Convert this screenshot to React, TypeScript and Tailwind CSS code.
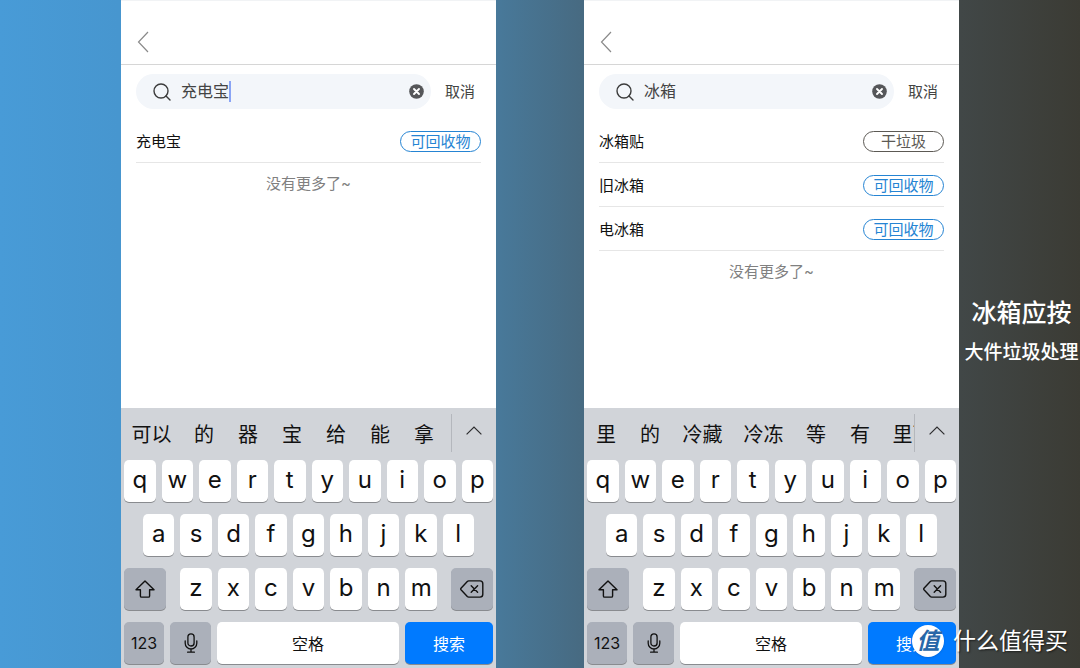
import * as React from "react";
import clsx from "clsx";

type Item = {
  name: string;
  type: "可回收物" | "干垃圾";
};

type PhoneProps = {
  id: string;
  query: string;
  focused?: boolean;
  items: Item[];
  candidates: string[];
};

function BackIcon() {
  return (
    <svg width="12" height="22" viewBox="0 0 12 22" fill="none" stroke="#8a8a8a" strokeWidth="1.2">
      <path d="M11 1 1.5 11 11 21" />
    </svg>
  );
}

function SearchIcon() {
  return (
    <svg width="18" height="18" viewBox="0 0 18 18" fill="none" stroke="#3c3c3c" strokeWidth="1.4">
      <circle cx="8" cy="8" r="7" />
      <path d="m13 13 4 4" strokeLinecap="round" />
    </svg>
  );
}

function ClearIcon() {
  return (
    <svg width="15" height="15" viewBox="0 0 15 15">
      <circle cx="7.5" cy="7.5" r="7.3" fill="#555659" />
      <path d="m5 5 5 5M10 5l-5 5" stroke="#fff" strokeWidth="1.9" strokeLinecap="round" />
    </svg>
  );
}

function ChevronUpIcon() {
  return (
    <svg width="16" height="9" viewBox="0 0 16 9" fill="none" stroke="#2d2d2f" strokeWidth="1.2">
      <path d="M.6 8.4 8 1l7.4 7.4" />
    </svg>
  );
}

function ShiftIcon() {
  return (
    <svg width="20" height="18" viewBox="0 0 20 18" fill="none" stroke="#111" strokeWidth="1.4" strokeLinejoin="round">
      <path d="M10 .9 19 9.8h-4.4v6.1c0 .7-.5 1.2-1.2 1.2H6.6c-.7 0-1.2-.5-1.2-1.2V9.8H1z" />
    </svg>
  );
}

function DeleteIcon() {
  return (
    <svg width="24" height="18" viewBox="0 0 24 18" fill="none" stroke="#111" strokeWidth="1.4" strokeLinejoin="round">
      <path d="M8.7.9H20a2.8 2.8 0 0 1 2.8 2.8v10.6a2.8 2.8 0 0 1-2.8 2.8H8.7c-.6 0-1-.2-1.4-.6L1 9.8c-.4-.5-.4-1.1 0-1.6l6.3-6.7c.4-.4.8-.6 1.4-.6z" />
      <path d="m11.2 5.800 6.400 6.400M17.600 5.800l-6.400 6.400" strokeLinecap="round" />
    </svg>
  );
}

function MicIcon() {
  return (
    <svg width="14" height="20" viewBox="0 0 14 20" fill="none" stroke="#111" strokeWidth="1.3" strokeLinecap="round">
      <rect x="3.9" y=".8" width="6.2" height="12.2" rx="3.1" />
      <path d="M1.2 7.8v2.4a5.8 5.8 0 0 0 11.6 0V7.8M7 16v3M3.6 19.2h6.8" />
    </svg>
  );
}

function Key({
  className,
  children,
  label,
}: {
  className?: string;
  children: React.ReactNode;
  label?: string;
}) {
  return (
    <button
      type="button"
      aria-label={label}
      className={clsx(
        "flex h-[42px] items-center justify-center rounded-[5px] shadow-[0_1px_0_#898b8f]",
        className,
      )}
    >
      {children}
    </button>
  );
}

function LetterKeys({ letters }: { letters: string }) {
  return (
    <>
      {letters.split("").map((letter) => (
        <Key key={letter} className="min-w-0 flex-1 bg-white pb-0.5 text-2xl text-[#111]">
          {letter}
        </Key>
      ))}
    </>
  );
}

function Keyboard({ candidates }: { candidates: string[] }) {
  return (
    <div className="mt-auto bg-[#d1d4d9] pb-1 text-[#111]">
      <div className="flex h-[44px]">
        <div className="flex min-w-0 flex-1 overflow-hidden pt-2.5">
          {candidates.map((word) => (
            <button
              key={word}
              type="button"
              className={clsx(
                "shrink-0 text-xl whitespace-nowrap",
                word.length > 1 ? "w-[61px]" : "w-[44px]",
              )}
            >
              {word}
            </button>
          ))}
        </div>
        <button
          type="button"
          aria-label="展开候选"
          className="mt-1.5 flex w-[45px] shrink-0 justify-center border-l border-[#b4b7bd] pt-3"
        >
          <ChevronUpIcon />
        </button>
      </div>

      <div className="flex flex-col gap-3 pt-2">
        <div className="flex gap-1.5 px-[3px]">
          <LetterKeys letters="qwertyuiop" />
        </div>
        <div className="flex gap-1.5 px-[22px]">
          <LetterKeys letters="asdfghjkl" />
        </div>
        <div className="flex gap-3.5 px-[3px]">
          <Key label="大写" className="w-[42px] bg-[#abb0ba]">
            <ShiftIcon />
          </Key>
          <div className="flex flex-1 gap-1.5">
            <LetterKeys letters="zxcvbnm" />
          </div>
          <Key label="删除" className="w-[42px] bg-[#abb0ba]">
            <DeleteIcon />
          </Key>
        </div>
        <div className="flex gap-1.5 px-[3px]">
          <Key className="w-[40px] bg-[#abb0ba] text-base">123</Key>
          <Key label="语音输入" className="w-[41px] bg-[#abb0ba]">
            <MicIcon />
          </Key>
          <Key className="flex-1 bg-white pt-0.5 text-base">空格</Key>
          <Key className="w-[88px] bg-[#007aff] pt-0.5 text-base text-white">搜索</Key>
        </div>
      </div>
    </div>
  );
}

function Phone({ id, query, focused, items, candidates }: PhoneProps) {
  return (
    <section className="flex min-w-0 flex-col border-t border-[#f1f3f5] bg-white">
      <header className="flex h-16 items-end border-b border-[#d6d6d6] px-4 pb-[11px]">
        <button type="button" aria-label="返回">
          <BackIcon />
        </button>
      </header>

      <form className="flex items-center px-[15px] pt-[9px]" onSubmit={(e) => e.preventDefault()}>
        <div className="flex h-[35px] min-w-0 flex-1 items-center rounded-full bg-[#f3f6fa] pr-[7px] pl-[17px]">
          <label htmlFor={id} aria-label="搜索" className="mr-[10px]">
            <SearchIcon />
          </label>
          <input
            id={id}
            type="text"
            defaultValue={query}
            className="field-sizing-content min-w-0 bg-transparent pb-0.5 text-base text-[#444] outline-none"
          />
          {focused && <span className="h-[21px] w-0.5 bg-[#8aa4f5]" />}
          <button type="reset" aria-label="清除" className="ml-auto">
            <ClearIcon />
          </button>
        </div>
        <button type="button" className="pt-0.5 pr-[6px] pl-[14px] text-[15px] text-[#444]">
          取消
        </button>
      </form>

      <ul className="px-[15px] pt-2.5">
        {items.map((item) => (
          <li
            key={item.name}
            className="flex h-[44px] items-center justify-between border-b border-[#e6e6e6] pt-0.5"
          >
            <span className="pt-0.5 text-[15px] text-[#111]">{item.name}</span>
            <span
              className={clsx(
                "flex h-[21px] w-[81px] items-center justify-center rounded-full border pt-0.5 text-[15px]",
                item.type === "干垃圾"
                  ? "border-[#5c5954] text-[#5c5954]"
                  : "border-[#2584d3] text-[#2584d3]",
              )}
            >
              {item.type}
            </span>
          </li>
        ))}
      </ul>
      <p className="pt-2.5 text-center text-[15px] text-[#808080]">没有更多了~</p>

      <Keyboard candidates={candidates} />
    </section>
  );
}

function Watermark() {
  return (
    <div className="absolute right-3 bottom-[11px] flex items-center gap-[9px]">
      <span className="flex size-8 items-center justify-center rounded-full bg-white text-[23px] font-bold text-[#2767a8] italic shadow-sm">
        值
      </span>
      <span className="text-[23px] leading-8 text-white [text-shadow:1px_1px_2px_rgba(0,0,0,0.6)]">
        什么值得买
      </span>
    </div>
  );
}

export default function App() {
  return (
    <main className="relative grid min-h-screen grid-cols-[121fr_375fr_88fr_375fr_121fr] overflow-hidden bg-[linear-gradient(90deg,#489bd7_0%,#4796cf_11%,#48799a_46%,#476a81_54%,#414747_89%,#3b3b34_100%)] font-['Inter','Noto_Sans_CJK_SC',sans-serif]">
      <div />
      <Phone
        id="search-powerbank"
        query="充电宝"
        focused
        items={[{ name: "充电宝", type: "可回收物" }]}
        candidates={["可以", "的", "器", "宝", "给", "能", "拿"]}
      />
      <div />
      <Phone
        id="search-fridge"
        query="冰箱"
        items={[
          { name: "冰箱贴", type: "干垃圾" },
          { name: "旧冰箱", type: "可回收物" },
          { name: "电冰箱", type: "可回收物" },
        ]}
        candidates={["里", "的", "冷藏", "冷冻", "等", "有", "里面"]}
      />
      <aside className="flex flex-col items-center justify-center gap-2 pb-1.5 pl-1 font-medium whitespace-nowrap text-white">
        <p className="text-[25px] leading-9">冰箱应按</p>
        <p className="text-[19px] leading-7">大件垃圾处理</p>
      </aside>
      <Watermark />
    </main>
  );
}
